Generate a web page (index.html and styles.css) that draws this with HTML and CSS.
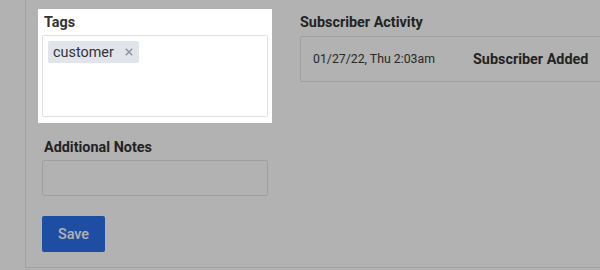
FILE: index.html
```html
<!DOCTYPE html>
<html>
<head>
<meta charset="utf-8">
<link rel="stylesheet" href="styles.css">
</head>
<body>
<div class="page">
  <div class="panel">
    <div class="col-left">
      <div class="field field-tags">
        <div class="label">Tags</div>
        <div class="tag-input">
          <span class="chip">customer<svg class="chip-x" width="8" height="8" viewBox="0 0 8 8"><path d="M0.8 0.8 L7.2 7.2 M7.2 0.8 L0.8 7.2" stroke="#8c92a8" stroke-width="1.5" fill="none"/></svg></span>
        </div>
      </div>
      <div class="field field-notes">
        <div class="label">Additional Notes</div>
        <div class="notes-input"></div>
      </div>
      <button class="btn-save">Save</button>
    </div>
    <div class="col-right">
      <div class="label">Subscriber Activity</div>
      <div class="activity">
        <span class="act-date">01/27/22, Thu 2:03am</span>
        <span class="act-event">Subscriber Added</span>
      </div>
    </div>
  </div>
</div>
<div class="overlay"></div>
</body>
</html>
```

FILE: styles.css
```css
html, body {
  margin: 0;
  padding: 0;
  background: #ffffff;
  overflow: hidden;
  width: 600px;
  height: 270px;
}
body {
  font-family: Roboto, "Liberation Sans", sans-serif;
  color: #3a3a3a;
  position: relative;
}
.page {
  padding-left: 25px;
}
.panel {
  display: flex;
  gap: 32px;
  height: 268px;
  box-sizing: border-box;
  border-left: 1px solid #e8e8e8;
  border-bottom: 1px solid #e8e8e8;
  padding: 9px 0 0 16px;
  overflow: hidden;
}
.col-left {
  width: 226px;
  flex: none;
  display: flex;
  flex-direction: column;
  align-items: flex-start;
}
.col-right {
  width: 320px;
  flex: none;
  padding-top: 4px;
}
.label {
  font-size: 14.4px;
  line-height: 20px;
  font-weight: 700;
  color: #333333;
}
.col-left .label {
  padding-left: 2px;
}
.field-tags {
  position: relative;
  z-index: 2;
  background: #ffffff;
  margin: 0 -4px;
  padding: 4px 4px 6px;
  width: 226px;
}
.field-tags .label {
  margin-bottom: 2px;
}
.tag-input {
  height: 82px;
  box-sizing: border-box;
  border: 1px solid #dfe1e7;
  border-radius: 2px;
  padding: 5px;
}
.chip {
  display: inline-flex;
  align-items: center;
  height: 22px;
  padding: 0 6px 0 5px;
  background: #e2e4eb;
  border-radius: 2px;
  font-size: 14.4px;
  color: #333333;
}
.chip-x {
  display: block;
  margin-left: 11px;
}
.field-notes {
  margin-top: 15px;
  width: 226px;
}
.field-notes .label {
  margin-bottom: 2px;
}
.notes-input {
  height: 36px;
  box-sizing: border-box;
  border: 1px solid #e3e3e3;
  border-radius: 2px;
}
.btn-save {
  margin-top: 20px;
  width: 63px;
  height: 36px;
  border: none;
  border-radius: 2px;
  background: #2b70eb;
  color: #ffffff;
  font-family: Roboto, "Liberation Sans", sans-serif;
  font-size: 14.4px;
  font-weight: 500;
  padding: 0;
}
.col-right .label {
  margin-bottom: 3px;
}
.activity {
  display: flex;
  align-items: center;
  height: 46px;
  box-sizing: border-box;
  border: 1px solid #e6e6ea;
  border-radius: 2px;
  padding-left: 12px;
}
.act-date {
  width: 160px;
  font-size: 12.3px;
  color: #3a3a3a;
}
.act-event {
  font-size: 14.4px;
  font-weight: 700;
  color: #333333;
}
.overlay {
  position: absolute;
  inset: 0;
  z-index: 1;
  background: rgba(0, 0, 0, 0.3);
}
```
